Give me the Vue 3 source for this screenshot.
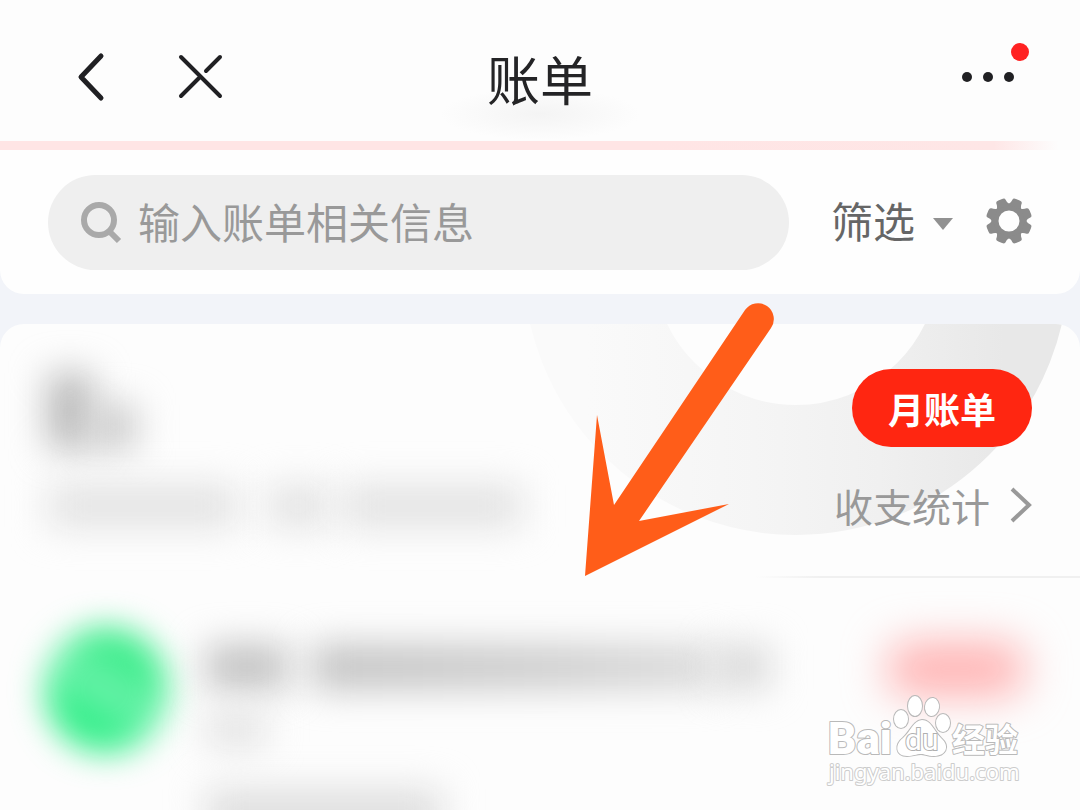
<script setup>
import { ref } from 'vue'

const keyword = ref('')
const gearTeeth = [0, 45, 90, 135, 180, 225, 270, 315]
</script>

<template>
  <div class="page">
    <header class="top">
      <nav class="nav" aria-label="导航">
        <button class="icon-btn" type="button" aria-label="返回">
          <svg width="28" height="50" viewBox="0 0 28 50">
            <path d="M24 4 L4 25 L24 46" fill="none" stroke="#202023" stroke-width="5" stroke-linecap="round" stroke-linejoin="round" />
          </svg>
        </button>
        <button class="icon-btn" type="button" aria-label="关闭">
          <svg width="46" height="46" viewBox="0 0 46 46">
            <path d="M3 3 L42 42 M3 42 L22 23 M28 17 L42 3" fill="none" stroke="#202023" stroke-width="4" stroke-linecap="round" />
          </svg>
        </button>
      </nav>
      <h1 class="title">账单</h1>
      <button class="icon-btn more" type="button" aria-label="更多">
        <svg width="52" height="10" viewBox="0 0 52 10" fill="#202023">
          <circle cx="5" cy="5" r="5" /><circle cx="26" cy="5" r="5" /><circle cx="47" cy="5" r="5" />
        </svg>
        <span class="badge"></span>
      </button>
    </header>

    <section class="search-panel">
      <label class="search">
        <svg width="42" height="44" viewBox="0 0 42 44" fill="none" stroke="#a9a9a9">
          <circle cx="19" cy="19" r="15" stroke-width="6" />
          <path d="M29 30 L39 40" stroke-width="6" />
        </svg>
        <input v-model="keyword" type="text" placeholder="输入账单相关信息" aria-label="输入账单相关信息" />
      </label>
      <button class="filter" type="button" aria-haspopup="true">
        筛选
        <svg width="20" height="12" viewBox="0 0 20 12"><path d="M0 0 H20 L10 12 Z" fill="#919191" /></svg>
      </button>
      <button class="icon-btn gear" type="button" aria-label="设置">
        <svg width="46" height="46" viewBox="-23 -23 46 46">
          <circle r="14" fill="none" stroke="#8b8b8b" stroke-width="7" />
          <path
            v-for="angle in gearTeeth"
            :key="angle"
            d="M-7 -15 Q-5 -18 -5 -21 Q-5 -23 -2 -23 L2 -23 Q5 -23 5 -21 Q5 -18 7 -15 Z"
            :transform="`rotate(${angle + 22.5})`"
            fill="#8b8b8b"
          />
        </svg>
      </button>
    </section>

    <main class="card">
      <svg class="ring" width="544" height="212" viewBox="0 0 544 212">
        <defs>
          <linearGradient id="ringFill" x1="0" y1="0" x2="1" y2="0">
            <stop offset="0" stop-color="#fafafa" />
            <stop offset="0.4" stop-color="#f5f5f5" />
            <stop offset="0.7" stop-color="#f0f0f0" />
            <stop offset="1" stop-color="#e8e8e8" />
          </linearGradient>
          <linearGradient id="ringFade" x1="0.1" y1="1" x2="0.6" y2="0.6">
            <stop offset="0.1" stop-color="#fdfdfd" />
            <stop offset="0.6" stop-color="#fdfdfd" stop-opacity="0" />
          </linearGradient>
        </defs>
        <circle cx="272" cy="-62" r="208" fill="none" stroke="url(#ringFill)" stroke-width="130" />
        <rect width="272" height="212" fill="url(#ringFade)" />
      </svg>

      <section class="summary">
        <div class="masked">
          <div class="masked-total"><i class="big"></i><i class="small"></i></div>
          <div class="masked-range"><i class="w-long"></i><i class="w-short"></i><i class="w-mid"></i></div>
        </div>
        <div class="actions">
          <button class="monthly" type="button">月账单</button>
          <a class="stats" href="#stats">
            收支统计
            <svg width="22" height="36" viewBox="0 0 22 36">
              <path d="M2 2 L19 18 L2 34" fill="none" stroke="#999" stroke-width="4" />
            </svg>
          </a>
        </div>
      </section>

      <section class="entry">
        <span class="avatar"></span>
        <div class="entry-text">
          <div class="line"><i class="name"></i><i class="detail"></i><i class="tail"></i></div>
          <i class="kind"></i>
          <i class="date"></i>
        </div>
        <span class="amount"></span>
      </section>
    </main>

    <svg class="arrow" width="190" height="274" viewBox="0 0 190 274">
      <path d="M1 274 L13 113 L30 203 L161 8 A15 15 0 0 1 187 26 L55 219 L145 202 Z" fill="#ff5d19" />
    </svg>

    <svg class="watermark" width="200" height="94" viewBox="0 0 200 94">
      <g fill="#fff" stroke="#b9b9b9" stroke-width="2" paint-order="stroke" stroke-linejoin="round">
        <text class="wm-latin" x="4" y="60">Bai</text>
        <text class="wm-cjk" x="128" y="58">经验</text>
        <text class="wm-url" x="5" y="86" stroke="#cccccc">jingyan.baidu.com</text>
        <ellipse cx="77" cy="25" rx="7" ry="9" />
        <ellipse cx="91" cy="12" rx="7" ry="10" />
        <ellipse cx="108" cy="13" rx="7" ry="9" transform="rotate(8 108 13)" />
        <ellipse cx="119" cy="29" rx="7" ry="9" />
        <path d="M98 26 C107 26 110 37 117 44 C127 53 121 62 110 62 C103 62 101 60 97 60 C92 60 90 62 83 62 C72 62 70 51 79 44 C87 37 89 27 98 26 Z" />
      </g>
      <text class="wm-du" x="81" y="56" fill="#fff" stroke="#b0b0b0" stroke-width="2" paint-order="stroke">du</text>
    </svg>
  </div>
</template>

<style>
body {
  margin: 0;
  background: #fdfdfd;
}
</style>

<style scoped>
.page {
  position: relative;
  display: flex;
  flex-direction: column;
  height: 100vh;
  overflow: hidden;
  background: #f2f4f9;
  font-family: "Noto Sans CJK SC", "Noto Sans", sans-serif;
}
button {
  padding: 0;
  border: 0;
  background: none;
  font-family: inherit;
}
svg {
  display: block;
  flex: none;
}
.top {
  display: grid;
  grid-template-columns: 1fr auto 1fr;
  align-items: center;
  height: 141px;
  padding: 0 66px;
  background: radial-gradient(ellipse 100px 26px at 50% 114px, #f4f4f4, transparent) #fdfdfd;
}
.nav {
  display: flex;
  align-items: center;
  gap: 73px;
  padding: 12px 0 0 11px;
}
.title {
  margin: 0;
  padding-top: 14px;
  color: #242426;
  font-size: 53px;
  line-height: 80px;
  font-weight: 400;
}
.more {
  position: relative;
  justify-self: end;
  padding-top: 12px;
}
.badge {
  position: absolute;
  top: -17px;
  right: -15px;
  width: 18px;
  height: 18px;
  border-radius: 50%;
  background: #ff2222;
}
.search-panel {
  position: relative;
  display: flex;
  align-items: center;
  margin-top: 9px;
  padding: 25px 48px 24px;
  border-radius: 0 0 24px 24px;
  background: #fefefe;
}
.search-panel::before {
  content: "";
  position: absolute;
  left: 0;
  right: 0;
  top: -9px;
  height: 9px;
  background: linear-gradient(90deg, #ffe5e5 60%, #fee6e6 92%, #fdfdfd 98%);
}
.search {
  display: flex;
  flex: 1;
  align-items: center;
  gap: 16px;
  min-width: 0;
  height: 95px;
  padding: 0 32px;
  box-sizing: border-box;
  border-radius: 48px;
  background: #efefef;
}
.search input {
  flex: 1;
  min-width: 0;
  height: 64px;
  padding: 0 0 4px;
  border: 0;
  outline: 0;
  background: none;
  color: #666;
  font-family: inherit;
  font-size: 42px;
}
.search input::placeholder {
  color: #999;
  opacity: 1;
}
.filter {
  display: flex;
  align-items: center;
  gap: 18px;
  margin-left: 42px;
  padding-bottom: 6px;
  color: #666;
  font-size: 42px;
  line-height: 64px;
}
.filter svg {
  margin-top: 8px;
}
.gear {
  margin-left: 33px;
  padding-bottom: 4px;
}
.card {
  position: relative;
  display: flex;
  flex: 1;
  flex-direction: column;
  min-height: 0;
  margin-top: 30px;
  border-radius: 24px 24px 0 0;
  overflow: hidden;
  background: #fdfdfd;
}
.ring {
  position: absolute;
  top: 0;
  right: 12px;
}
.summary {
  position: relative;
  display: flex;
  justify-content: space-between;
  padding: 45px 48px 42px;
}
.summary::after {
  content: "";
  position: absolute;
  right: 0;
  bottom: -1px;
  width: 30%;
  height: 2px;
  background: linear-gradient(90deg, transparent, #f0f0f0 20%);
}
.masked i,
.entry i {
  display: block;
  filter: blur(18px);
}
.masked-total {
  display: flex;
  align-items: flex-end;
  height: 80px;
}
.masked-total .big {
  width: 44px;
  height: 76px;
  background: #b8b8b8;
}
.masked-total .small {
  width: 44px;
  height: 44px;
  background: #c8c8c8;
}
.masked-range {
  display: flex;
  margin-top: 36px;
}
.masked-range i {
  height: 42px;
  background: #e2e2e2;
}
.w-long { width: 190px; }
.w-short { width: 60px; margin-left: 30px; }
.w-mid { width: 180px; margin-left: 14px; }
.actions {
  display: flex;
  flex-direction: column;
  align-items: flex-end;
  gap: 28px;
}
.monthly {
  width: 180px;
  height: 78px;
  border-radius: 39px;
  background: #ff2611;
  color: #fff;
  font-size: 36px;
  line-height: 76px;
  font-weight: 700;
}
.stats {
  display: flex;
  align-items: center;
  gap: 20px;
  color: #999;
  font-size: 39px;
  line-height: 60px;
  text-decoration: none;
}
.entry {
  display: flex;
  flex: 1;
  align-items: flex-start;
  min-height: 0;
  padding: 50px 56px 0 44px;
}
.avatar {
  flex: none;
  width: 124px;
  height: 126px;
  border-radius: 50%;
  background: linear-gradient(30deg, #2dee86 25%, #6cf2ab 50%, #38ec88 75%);
  filter: blur(16px);
}
.entry-text {
  flex: 1;
  padding: 18px 0 0 38px;
}
.line {
  display: flex;
}
.line i {
  height: 44px;
  background: #c0c0c0;
}
.line .name { width: 82px; }
.line .detail { flex: 1; margin-left: 24px; background: linear-gradient(90deg, #c0c0c0, #cccccc 60%, #dadada); }
.line .tail { width: 54px; background: #d8d8d8; }
.entry .kind {
  width: 60px;
  height: 30px;
  margin-top: 26px;
  background: #dedede;
}
.entry .date {
  width: 236px;
  height: 50px;
  margin-top: 44px;
  background: #dedede;
}
.amount {
  flex: none;
  width: 136px;
  height: 52px;
  margin: 16px 0 0 118px;
  border-radius: 20px;
  background: #ffb0b0;
  filter: blur(22px);
}
.arrow {
  position: absolute;
  top: 302px;
  left: 584px;
}
.watermark {
  position: absolute;
  right: 56px;
  bottom: 22px;
}
.wm-latin {
  font: 900 44px Roboto, sans-serif;
}
.wm-cjk {
  font: 700 33px "Noto Sans CJK SC", sans-serif;
}
.wm-url {
  font: 400 22px "Noto Sans", sans-serif;
}
.wm-du {
  font: 400 30px Roboto, sans-serif;
}
</style>
